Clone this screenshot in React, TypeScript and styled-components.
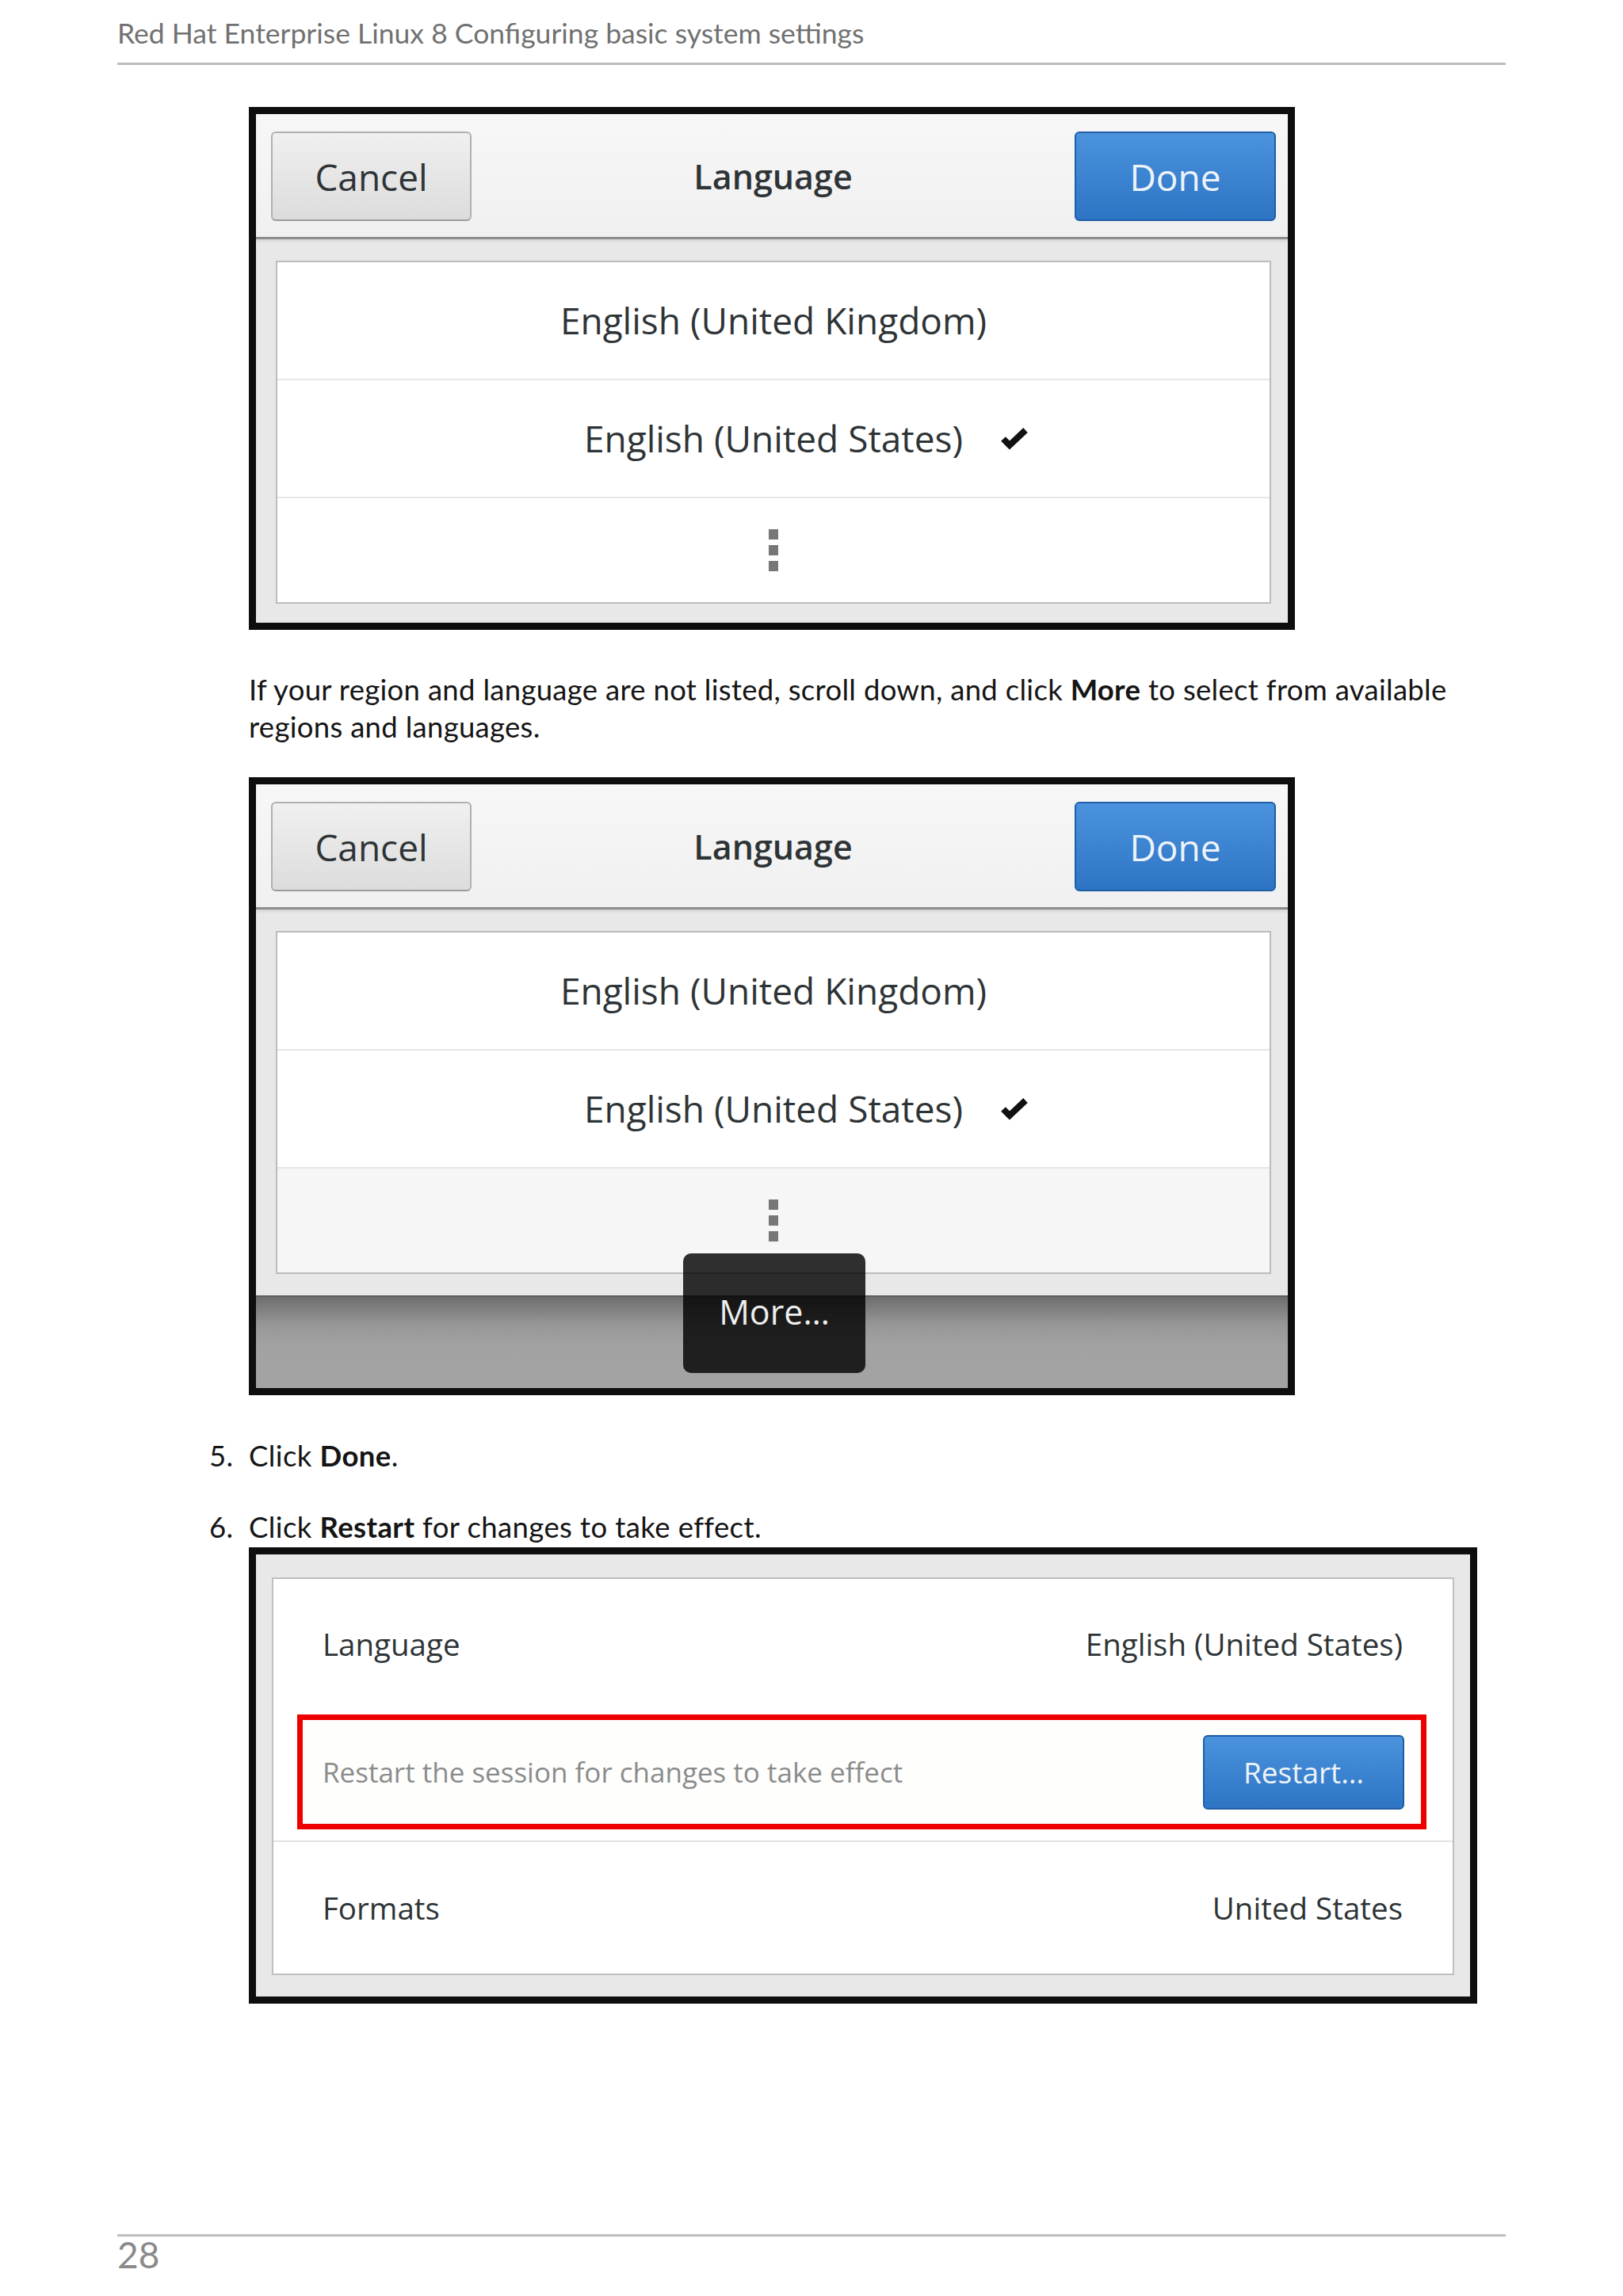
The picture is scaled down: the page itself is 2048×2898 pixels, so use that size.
import React from "react";
import styled, { createGlobalStyle, css } from "styled-components";

const Global = createGlobalStyle`
  html, body { margin: 0; padding: 0; background: #ffffff; }
  body { font-family: "Lato", "Open Sans", sans-serif; color: #151515; }
  * { box-sizing: border-box; }
`;

const Page = styled.div`
  width: 2048px;
  min-height: 2898px;
  padding: 0 148px;
  display: flex;
  flex-direction: column;
`;

const RunningHead = styled.header`
  padding-top: 22px;
  border-bottom: 3px solid #bdbdbd;
`;

const HeadTitle = styled.div`
  font-size: 35.5px;
  line-height: 40px;
  color: #717171;
  margin-bottom: 17px;
`;

const Content = styled.main`
  padding-left: 166px;
  display: flex;
  flex-direction: column;
`;

const Paragraph = styled.p`
  margin: 52px 0 0;
  max-width: 1560px;
  font-size: 36.5px;
  letter-spacing: 0.3px;
  line-height: 47px;
`;

const Strong = styled.b`
  font-weight: 700;
`;

const Steps = styled.ol`
  list-style: none;
  margin: 53px 0 0 -50px;
  padding: 0;
  display: flex;
  flex-direction: column;
  gap: 43px;
  font-size: 36.5px;
  letter-spacing: 0.4px;
  line-height: 47px;
`;

const Step = styled.li`
  display: grid;
  grid-template-columns: 50px 1fr;
`;

const StepBody = styled.div`
  display: flex;
  flex-direction: column;
`;

/* ---------- screenshot frames ---------- */

const Frame = styled.div<{ $width: number; $top: number }>`
  width: ${(p) => p.$width}px;
  margin-top: ${(p) => p.$top}px;
  border: 9px solid #0e0e0e;
  background: #e8e8e8;
  font-family: "Open Sans", "Noto Sans", sans-serif;
  letter-spacing: 0;
  color: #2e3436;
`;

const DialogBar = styled.div`
  display: grid;
  grid-template-columns: 253px 1fr 254px;
  align-items: center;
  padding: 22px 15px 20px 19px;
  background: linear-gradient(#f7f7f7, #f0f0f0);
  border-bottom: 3px solid #8c8c8c;
  box-shadow: 0 2px 4px rgba(0, 0, 0, 0.1);
`;

const BarButton = styled.button<{ $primary?: boolean }>`
  height: 113px;
  border-radius: 6px;
  display: flex;
  align-items: center;
  justify-content: center;
  font-family: inherit;
  font-size: 46px;
  padding: 0;
  ${(p) =>
    p.$primary
      ? css`
          background: linear-gradient(#4b93dd, #2d74c4);
          border: 2px solid #1f5ea6;
          color: #eef3fa;
        `
      : css`
          background: linear-gradient(#f0f0f0, #dcdcdc);
          border: 2px solid #b0b0b0;
          border-bottom-color: #9c9c9c;
          color: #2e3436;
        `}
`;

const DialogTitle = styled.div`
  text-align: center;
  font-size: 43px;
  font-weight: 600;
  color: #2e3436;
`;

const ListArea = styled.div<{ $bottom: number }>`
  padding: 27px 21px ${(p) => p.$bottom}px 25px;
`;

const LangList = styled.div`
  border: 2px solid #bcbcbc;
  background: #ffffff;
`;

const LangRow = styled.div<{ $height: number; $last?: boolean; $hover?: boolean }>`
  height: ${(p) => p.$height}px;
  display: grid;
  grid-template-columns: 1fr auto 1fr;
  align-items: center;
  background: ${(p) => (p.$hover ? "#f6f6f6" : "#ffffff")};
  border-bottom: ${(p) => (p.$last ? "none" : "2px solid #e6e6e6")};
`;

const RowText = styled.div`
  grid-column: 2;
  font-size: 46px;
  line-height: 1.2;
  color: #2e3436;
`;

const CheckCell = styled.div`
  grid-column: 3;
  justify-self: start;
  padding-left: 46px;
  display: flex;
  align-items: center;
`;

const Dots = styled.div`
  grid-column: 2;
  display: flex;
  flex-direction: column;
  gap: 7px;
`;

const Dot = styled.span`
  display: block;
  width: 12px;
  height: 13px;
  background: #777777;
`;

const Lower = styled.div`
  position: relative;
`;

const DimBar = styled.div`
  height: 117px;
  border-top: 2px solid #5c5c5c;
  background: linear-gradient(#6e6e6e, #969696 34px, #a2a2a2 60px, #a3a3a3);
`;

const MorePopover = styled.div`
  position: absolute;
  left: 539px;
  bottom: 19px;
  width: 230px;
  height: 151px;
  border-radius: 10px;
  background: rgba(0, 0, 0, 0.81);
  color: #eeeeee;
  font-size: 43px;
  display: flex;
  align-items: center;
  justify-content: center;
  padding-bottom: 4px;
`;

const SettingsArea = styled.div`
  padding: 29px 20px 27px 20px;
`;

const SettingsList = styled.div`
  border: 2px solid #bfbfbf;
  background: #ffffff;
`;

const SettingRow = styled.div<{ $height: number }>`
  height: ${(p) => p.$height}px;
  display: flex;
  align-items: center;
  justify-content: space-between;
  padding: 0 63px 0 62px;
  font-size: 38.5px;
  color: #2e3436;
`;

const RestartRow = styled.div`
  padding: 6px 33px 14px 30px;
  border-bottom: 2px solid #e3e3e3;
`;

const Highlight = styled.div`
  height: 145px;
  border: 7px solid #ee0000;
  display: flex;
  align-items: center;
  justify-content: space-between;
  padding: 0 21px 0 25px;
  background: #fefefc;
`;

const RestartNote = styled.span`
  font-size: 35px;
  color: #8a8c8c;
`;

const RestartButton = styled.button`
  width: 254px;
  height: 94px;
  border-radius: 6px;
  background: linear-gradient(#4b93dd, #2d74c4);
  border: 2px solid #1f5ea6;
  color: #eef3fa;
  font-family: inherit;
  font-size: 37px;
  padding: 0;
  display: flex;
  align-items: center;
  justify-content: center;
`;

const PageFoot = styled.footer`
  margin-top: auto;
  border-top: 3px solid #bdbdbd;
  padding-bottom: 29px;
`;

const PageNum = styled.div`
  font-size: 46px;
  line-height: 46px;
  color: #8a8a8a;
`;

const Check = () => (
  <svg width="38" height="30" viewBox="0 0 38 30" aria-hidden="true">
    <path d="M5 15 L13 23 L33 4" fill="none" stroke="#111" strokeWidth="8" strokeLinejoin="miter" />
  </svg>
);

const MoreDots = () => (
  <Dots>
    <Dot />
    <Dot />
    <Dot />
  </Dots>
);

const LanguageDialog: React.FC<{ top: number; withMore?: boolean }> = ({ top, withMore }) => {
  const list = (
    <ListArea $bottom={withMore ? 27 : 24}>
      <LangList>
        <LangRow $height={149}>
          <RowText>English (United Kingdom)</RowText>
        </LangRow>
        <LangRow $height={149}>
          <RowText>English (United States)</RowText>
          <CheckCell>
            <Check />
          </CheckCell>
        </LangRow>
        <LangRow $height={131} $last $hover={withMore}>
          <MoreDots />
        </LangRow>
      </LangList>
    </ListArea>
  );
  return (
    <Frame $width={1320} $top={top}>
      <DialogBar>
        <BarButton>Cancel</BarButton>
        <DialogTitle>Language</DialogTitle>
        <BarButton $primary>Done</BarButton>
      </DialogBar>
      {withMore ? (
        <Lower>
          {list}
          <DimBar />
          <MorePopover>More…</MorePopover>
        </Lower>
      ) : (
        list
      )}
    </Frame>
  );
};

export default function App() {
  return (
    <>
      <Global />
      <Page>
        <RunningHead>
          <HeadTitle>Red Hat Enterprise Linux 8 Configuring basic system settings</HeadTitle>
        </RunningHead>
        <Content>
          <LanguageDialog top={53} />
          <Paragraph>
            If your region and language are not listed, scroll down, and click <Strong>More</Strong> to select
            from available regions and languages.
          </Paragraph>
          <LanguageDialog top={40} withMore />
          <Steps>
            <Step>
              <span>5.</span>
              <span>
                Click <Strong>Done</Strong>.
              </span>
            </Step>
            <Step>
              <span>6.</span>
              <StepBody>
                <span>
                  Click <Strong>Restart</Strong> for changes to take effect.
                </span>
                <Frame $width={1550} $top={2}>
                  <SettingsArea>
                    <SettingsList>
                      <SettingRow $height={165}>
                        <span>Language</span>
                        <span>English (United States)</span>
                      </SettingRow>
                      <RestartRow>
                        <Highlight>
                          <RestartNote>Restart the session for changes to take effect</RestartNote>
                          <RestartButton>Restart…</RestartButton>
                        </Highlight>
                      </RestartRow>
                      <SettingRow $height={166}>
                        <span>Formats</span>
                        <span>United States</span>
                      </SettingRow>
                    </SettingsList>
                  </SettingsArea>
                </Frame>
              </StepBody>
            </Step>
          </Steps>
        </Content>
        <PageFoot>
          <PageNum>28</PageNum>
        </PageFoot>
      </Page>
    </>
  );
}
